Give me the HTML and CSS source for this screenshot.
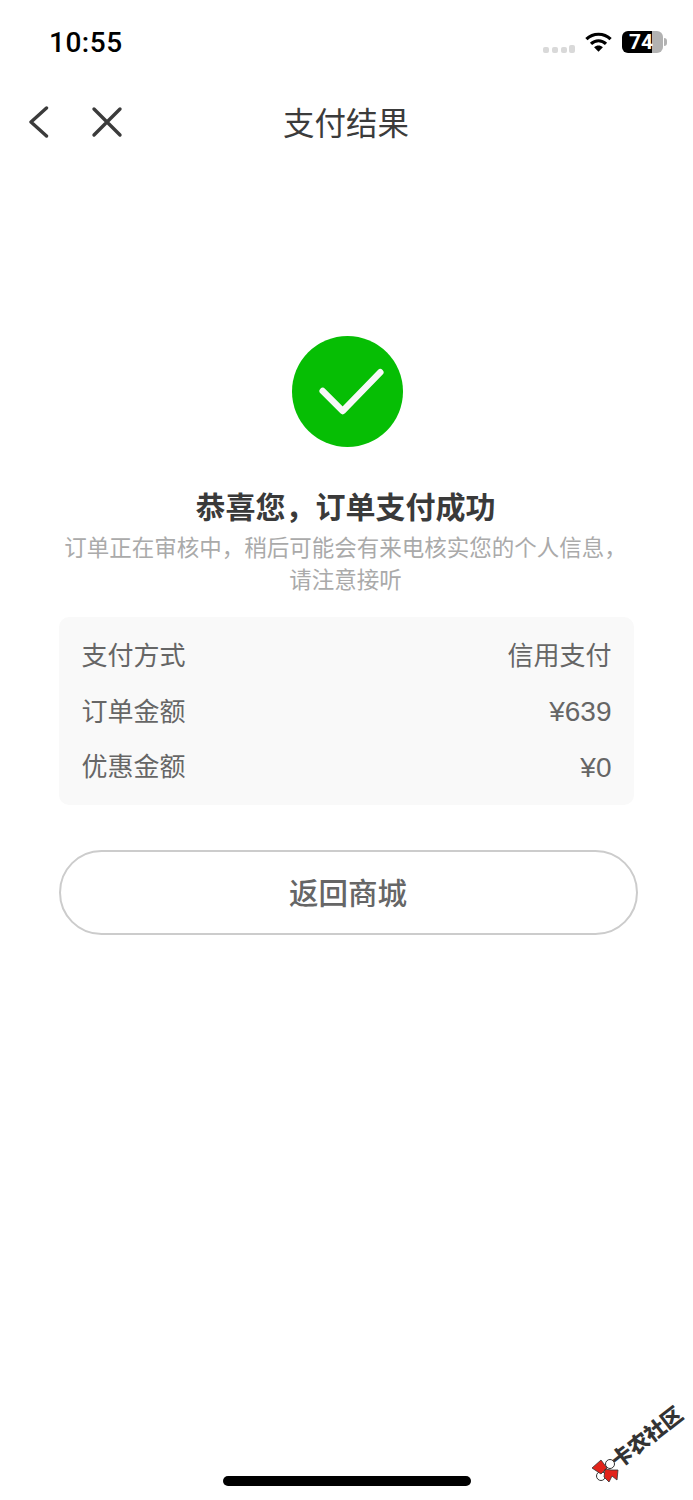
FILE: index.html
```html
<!DOCTYPE html>
<html lang="zh-CN">
<head>
<meta charset="utf-8">
<title>支付结果</title>
<link rel="stylesheet" href="styles.css">
</head>
<body>
<div class="page">
  <div class="status">
    <span class="time">10:55</span>
    <div class="status-right">
      <svg class="signal" width="32" height="9" viewBox="0 0 32 9"><rect x="0" y="2" width="6" height="6" rx="2"/><rect x="9" y="2" width="6" height="6" rx="2"/><rect x="18" y="2" width="6" height="6" rx="2"/><rect x="26" y="0" width="6" height="8" rx="2"/></svg>
      <svg class="wifi" width="27" height="20" viewBox="0 0 27 20" fill="none" stroke="#000" stroke-width="3.2"><path d="M1.4 7.2C8.2 .6 18.8 .6 25.6 7.2"/><path d="M6 11.8c4.300-4.100 10.700-4.100 15 0"/><path d="M13.500 19.800l-4.400-4.600c2.500-2.200 6.300-2.200 8.800 0z" fill="#000" stroke="none"/></svg>
      <div class="battery"><div class="battery-body"><span class="battery-text">74</span></div><span class="battery-nub"></span></div>
    </div>
  </div>
  <div class="nav">
    <svg class="nav-back" width="20" height="32" viewBox="0 0 20 32" fill="none" stroke="#3b3b3b" stroke-width="3.400" stroke-linecap="round" stroke-linejoin="round"><path d="M17.500 2L2 16l15.500 14"/></svg>
    <svg class="nav-close" width="32" height="32" viewBox="0 0 32 32" fill="none" stroke="#3b3b3b" stroke-width="3.400" stroke-linecap="round"><path d="M3 3l26 26M29 3L3 29"/></svg>
    <h1 class="nav-title">支付结果</h1>
  </div>
  <main class="main">
    <svg class="success" width="111" height="111" viewBox="0 0 111 111"><circle cx="55.500" cy="55.500" r="55.500" fill="#06be04"/><path d="M30.700 55l20 20 37.600-38.700" fill="none" stroke="#f8f8f8" stroke-width="6.500" stroke-linecap="round" stroke-linejoin="round"/></svg>
    <h2 class="headline">恭喜您，订单支付成功</h2>
    <p class="note">订单正在审核中，稍后可能会有来电核实您的个人信息，<br>请注意接听</p>
    <div class="card">
      <div class="row"><span>支付方式</span><span>信用支付</span></div>
      <div class="row"><span>订单金额</span><span class="num">¥639</span></div>
      <div class="row"><span>优惠金额</span><span class="num">¥0</span></div>
    </div>
    <button class="back-btn">返回商城</button>
  </main>
  <div class="home-bar"></div>
  <svg class="mark-logo" width="30" height="30" viewBox="0 0 30 30"><circle cx="20" cy="10" r="4.500" fill="#fff" stroke="#333" stroke-width="1"/><circle cx="11" cy="22" r="4.500" fill="#fff" stroke="#333" stroke-width="1"/><path d="M2 14l9-8 6 8-6 6zM15 15l6 1 7 0-1 10-5-4-3 6-5-5z" fill="#e2231a" stroke="#333" stroke-width=".8"/></svg>
  <span class="mark-text">卡农社区</span>
</div>
</body>
</html>
```
FILE: styles.css
```css
* { box-sizing: border-box; }
html, body { margin: 0; padding: 0; background: #fff; }
.page {
  position: relative;
  width: 693px;
  height: 1500px;
  overflow: hidden;
  display: flex;
  flex-direction: column;
  font-family: "Noto Sans CJK SC", "Noto Sans", sans-serif;
}
.status {
  height: 84px;
  display: flex;
  justify-content: space-between;
  align-items: center;
  padding: 0 26px 0 49px;
}
.time {
  font-family: Roboto, sans-serif;
  font-size: 28px;
  font-weight: 500;
  letter-spacing: .5px;
  color: #000;
}
.status-right { display: flex; align-items: center; }
.signal { fill: #d9d9d9; margin: 14px 10px 0 0; }
.wifi { margin-right: 10px; }
.battery { display: flex; align-items: center; }
.battery-body {
  width: 41px;
  height: 22px;
  border-radius: 6px;
  background: linear-gradient(to right, #000 30px, #b2b2b2 30px);
  display: flex;
  align-items: center;
  padding-left: 7px;
}
.battery-text {
  font-family: Roboto, sans-serif;
  font-size: 21px;
  font-weight: 700;
  line-height: 22px;
  color: #fff;
}
.battery-nub {
  width: 3px;
  height: 8px;
  margin-left: 1px;
  border-radius: 0 4px 4px 0;
  background: #b2b2b2;
}
.nav {
  height: 76px;
  display: flex;
  align-items: center;
  padding-left: 29px;
}
.nav-close { margin-left: 42px; }
.nav-title {
  margin: -2px 0 0 160px;
  font-size: 31.500px;
  font-weight: 400;
  line-height: 40px;
  color: #3b3b3b;
}
.main {
  display: flex;
  flex-direction: column;
  align-items: center;
  padding-top: 176px;
}
.success { display: block; margin-left: 2px; }
.headline {
  margin: 38px 2px 0 0;
  font-size: 30px;
  font-weight: 700;
  line-height: 40px;
  color: #3a3a3a;
}
.note {
  margin: 5px 2px 0 0;
  font-size: 22.500px;
  line-height: 32px;
  color: #aaa;
  text-align: center;
}
.card {
  width: 575px;
  height: 188px;
  margin: 23px 0 0 -1px;
  padding: 9px 22px 9px 23px;
  background: #f9f9f9;
  border-radius: 10px;
}
.row {
  height: 55.500px;
  display: flex;
  justify-content: space-between;
  align-items: center;
  font-size: 26px;
  color: #666;
}
.num {
  font-family: "Liberation Sans", sans-serif;
  font-size: 28px;
  padding-top: 6px;
}
.back-btn {
  width: 579px;
  height: 85px;
  margin: 45px 0 0 3px;
  border: 2px solid #ccc;
  border-radius: 43px;
  background: #fff;
  font-family: inherit;
  font-size: 29.500px;
  font-weight: 500;
  color: #666;
  padding-bottom: 4px;
}
.home-bar {
  width: 248px;
  height: 10px;
  margin: auto 0 14px 223px;
  border-radius: 5px;
  background: #000;
}
.mark-logo {
  position: absolute;
  left: 590px;
  top: 1454px;
}
.mark-text {
  position: absolute;
  left: 604px;
  top: 1421px;
  font-size: 21px;
  font-weight: 900;
  line-height: 30px;
  color: #333;
  white-space: nowrap;
  transform: rotate(-38deg);
}
```
